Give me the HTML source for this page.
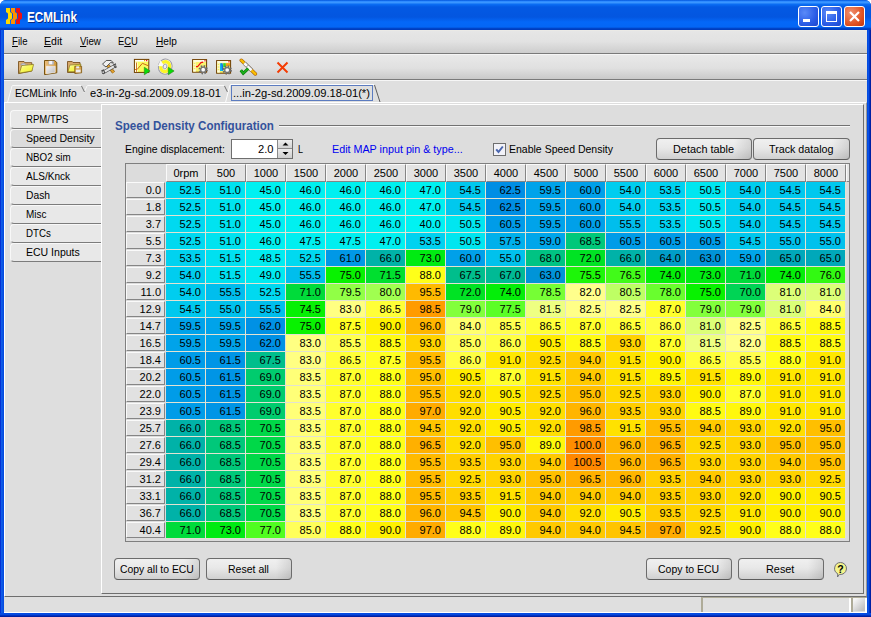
<!DOCTYPE html>
<html><head><meta charset="utf-8"><title>ECMLink</title>
<style>
html,body{margin:0;padding:0;background:#fff;}
body{width:871px;height:617px;overflow:hidden;position:relative;font-family:"Liberation Sans",sans-serif;font-size:11px;color:#000;}
div,span{box-sizing:border-box;}
.abs{position:absolute;}
.l{position:absolute;white-space:nowrap;line-height:13px;font-size:11px;transform-origin:0 0;}
#win{position:absolute;left:0;top:0;width:871px;height:617px;background:linear-gradient(90deg,#001ccc 0,#0f5ce8 1.5px,#0a52e2 3px,#0048e0 4px,#0048e0 867px,#0a52e4 868.5px,#0036c8 869.5px,#001590 871px);border-radius:6px 6px 0 0;overflow:hidden;}
#title{position:absolute;left:0;top:0;width:871px;height:30px;background:linear-gradient(#0054dc 0px,#2f8cff 1.5px,#3a96ff 2.5px,#0a6cf2 4.5px,#0359e3 7px,#0356e0 17px,#0468f8 22px,#0466f5 27px,#0044c8 28.5px,#0038b8 30px);}
#title .l{line-height:16px;text-shadow:1px 1px 0 #0a2a80;}
#title .t{position:absolute;left:26px;top:7px;font-size:14px;color:#fff;letter-spacing:-0.2px;text-shadow:1px 1px 0 #0a2a80;}
.tb{position:absolute;top:6px;width:21px;height:21px;border:1px solid #fff;border-radius:3px;background:radial-gradient(circle at 30% 30%,#5a8af8,#2a5ce6 60%,#1c46cc);}
#client{position:absolute;left:4px;top:30px;width:863px;height:583px;background:#dedede;}
#menu{position:absolute;left:0;top:0;width:863px;height:24px;background:linear-gradient(#f0eee6 0,#e6e6e6 1px,#e2e2e2 50%,#cdcdcd);border-bottom:1px solid #7a7a7a;}
#menu span{position:absolute;top:5px;font-size:11px;}
#tool{position:absolute;left:0;top:24px;width:863px;height:26px;background:linear-gradient(#e9e9e9,#e0e0e0 55%,#c9c9c9);border-bottom:1px solid #7a7a7a;border-top:1px solid #f6f6f6;}
u{text-decoration:underline;}
#panel{position:absolute;left:4px;top:102px;width:863px;height:495px;border-top:1px solid #fff;border-left:1px solid #fff;border-bottom:1px solid #6e6e6e;border-right:1px solid #9a9a9a;background:#dedede;}
.stab{position:absolute;left:10px;width:92px;height:19px;background:#e8e8e8;border:1px solid #7c7c7c;border-right:1px solid #7c7c7c;border-top:1px solid #f8f8f8;border-left:1px solid #f8f8f8;border-radius:4px 0 0 4px;padding:3px 0 0 15px;font-size:11px;white-space:nowrap;}
#inner{position:absolute;left:101px;top:104px;width:763px;height:490px;border-left:1px solid #fff;border-top:1px solid #fff;border-right:1px solid #6e6e6e;border-bottom:1px solid #6e6e6e;background:#dddddd;}
.btn{position:absolute;height:22px;border:1px solid #6c6c6c;border-radius:4px;background:linear-gradient(90deg,rgba(0,0,0,0) 0,rgba(0,0,0,0) 82%,rgba(0,0,0,0.10) 100%),linear-gradient(#f0f0f0,#e8e8e8 45%,#d0d0d0);border-bottom-color:#5c5c5c;}
#tbl{position:absolute;left:125px;top:163px;width:725px;height:379px;border:1px solid #7f7f7f;background:#dcdcdc;}
.ch{position:absolute;top:0;width:40px;height:18px;background:#e3e3e3;border-left:1px solid #fafafa;border-top:1px solid #fafafa;border-right:1px solid #858585;border-bottom:1px solid #858585;text-align:center;padding-top:2px;font-size:11px;line-height:13px;}
.rh{position:absolute;left:0;width:39px;height:16px;background:#e1e1e1;border-left:1px solid #fafafa;border-top:1px solid #fafafa;border-right:1px solid #858585;border-bottom:1px solid #858585;text-align:right;padding:1px 3px 0 0;font-size:11px;line-height:13px;}
.c{position:absolute;width:40px;height:17px;border-right:1px solid #e2e2d2;border-bottom:1px solid #e2e2d2;text-align:right;padding:2px 4px 0 0;font-size:11px;line-height:13px;}
</style></head><body>
<div id="win">
<div id="title">
<svg class="abs" style="left:6px;top:8px" width="17" height="16" viewBox="0 0 17 16"><path d="M0 0h4v4l2 1.500v5l-2 1.500v4h-4v-4l2-1.500v-5l-2-1.500z" fill="#ffd800"/><path d="M5 0h4v4l2 1.500v5l-2 1.500v4h-4v-4l2-1.500v-5l-2-1.500z" fill="#ff9000"/><path d="M10 0h4v4l2 1.500v5l-2 1.500v4h-4v-4l2-1.500v-5l-2-1.500z" fill="#f01010"/></svg>
<div class="l" style="left:26.9px;top:9px;font-size:14px;font-weight:bold;color:#fff;transform:scaleX(0.835);">ECMLink</div>
<div class="tb" style="left:798px"><div class="abs" style="left:4px;top:12px;width:7px;height:3px;background:#fff"></div></div>
<div class="tb" style="left:821px"><div class="abs" style="left:4px;top:4px;width:11px;height:11px;border:1px solid #fff;border-top:3px solid #fff"></div></div>
<div class="tb" style="left:844px;background:radial-gradient(circle at 30% 30%,#f09070,#e0501f 65%,#c0360f)"><svg class="abs" style="left:3px;top:3px" width="13" height="13"><path d="M2 2l9 9M11 2l-9 9" stroke="#fff" stroke-width="2.2"/></svg></div>
</div>
<div id="client">
<div id="menu"></div>
<div id="tool"></div>
</div>
<div class="l" style="left:11.5px;top:35px;font-size:11px;transform:scaleX(0.873);"><u>F</u>ile</div>
<div class="l" style="left:44.3px;top:35px;font-size:11px;transform:scaleX(0.959);"><u>E</u>dit</div>
<div class="l" style="left:79.7px;top:35px;font-size:11px;transform:scaleX(0.883);"><u>V</u>iew</div>
<div class="l" style="left:118.3px;top:35px;font-size:11px;transform:scaleX(0.856);">E<u>C</u>U</div>
<div class="l" style="left:155.5px;top:35px;font-size:11px;transform:scaleX(0.919);"><u>H</u>elp</div>
<svg class="abs" style="left:0;top:54px" width="300" height="26" viewBox="0 54 300 26">
<defs>
<linearGradient id="gy" x1="0" y1="0" x2="1" y2="1"><stop offset="0" stop-color="#fffff0"/><stop offset="0.350" stop-color="#f8f868"/><stop offset="1" stop-color="#f0f020"/></linearGradient>
<linearGradient id="gl" x1="0" y1="0" x2="1" y2="1"><stop offset="0" stop-color="#f4f4f8"/><stop offset="1" stop-color="#bcbcbc"/></linearGradient>
<linearGradient id="gb" x1="0" y1="0" x2="1" y2="0"><stop offset="0" stop-color="#ecc080"/><stop offset="1" stop-color="#d09838"/></linearGradient>
</defs>
<!-- open folder -->
<path d="M18.500 61.500h5.500l0.800 1.200h7v8.300l-13.300 2.600z" fill="#dcae72" stroke="#7a5220" stroke-width="0.900"/>
<path d="M21 64q3.500-2 5.500 1l1-0.800v3.800h-4l1.200-1.200q-1.200-1.800-3.700-1.800z" fill="#c9ccd8" stroke="#8a8e9c" stroke-width="0.500"/>
<path d="M21.700 65.600l11.900-1.200-1.700 6.600-12.500 2.100z" fill="url(#gy)" stroke="#86761c" stroke-width="0.700"/>
<!-- floppy -->
<path d="M44.500 60.500h10l2.300 2v10.300l-12.300 1.800z" fill="url(#gb)" stroke="#7a540e" stroke-width="1"/>
<rect x="48.400" y="60.800" width="5.400" height="3.800" fill="#b4b8c6"/><rect x="49.200" y="61" width="3" height="3.200" fill="#f4f4fa"/>
<path d="M46.300 66.200h8.900v6.200l-8.900 1.300z" fill="url(#gl)" stroke="#f6f6fa" stroke-width="0.500"/>
<!-- folder + floppy -->
<path d="M67.500 61.500h4.700l0.800 1h7v10h-12.500z" fill="#d8a868" stroke="#7a5220" stroke-width="0.900"/>
<path d="M69.800 65.100l11.100-0.900-1.500 7.500h-11.400z" fill="url(#gy)" stroke="#86761c" stroke-width="0.700"/>
<path d="M74.800 66.200h6.800v6.600l-6.800 0.700z" fill="#d8a048" stroke="#7a540e" stroke-width="0.800"/>
<rect x="76.200" y="66.300" width="3" height="2" fill="#e8ecf4"/><rect x="75.800" y="69.600" width="4.800" height="2.800" fill="#ececf0"/>
<!-- tools -->
<path d="M107.500 65l6.200 7.500" stroke="#7a5210" stroke-width="3.400"/>
<path d="M107.500 65l6.200 7.500" stroke="#e0a030" stroke-width="2.200"/>
<path d="M114.500 66l-11 6.300" stroke="#4c4c4c" stroke-width="3.600" stroke-linecap="round"/>
<path d="M114.500 66l-11 6.300" stroke="#e4e4e4" stroke-width="2.200" stroke-linecap="round"/>
<path d="M116 63.800l-2.300 1.200 1.600 2.500 1.400-0.700M101.300 71l2.200-1 1.200 2.600-2 1.300" fill="none" stroke="#4c4c4c" stroke-width="1.100"/>
<path d="M102.500 64.200l3.700-3.700h5l2.300 2.700-2.800-0.700-4.700 4.500z" fill="#f0f0f0" stroke="#444" stroke-width="0.900"/>
<!-- graph + play -->
<rect x="134.400" y="59.400" width="14.400" height="13" fill="#fafa5c" stroke="#6e3c00" stroke-width="1"/>
<rect x="135" y="60" width="13.200" height="1.600" fill="#fff"/><rect x="144" y="60" width="1.200" height="1.200" fill="#f6a800"/><rect x="146" y="60" width="1.300" height="1.200" fill="#f01818"/>
<rect x="135" y="62.300" width="2.600" height="9.600" fill="#fffff0"/>
<path d="M136.500 62.500v9.400M135 69.500h2" stroke="#cc6c14" stroke-width="0.900" fill="none"/>
<path d="M137 69.600l5.400-6.300 5.800 2.400" stroke="#cc6418" stroke-width="1" fill="none"/>
<path d="M144.300 67.200v7.600l5.800-3.800z" fill="#08dc08" stroke="#2c8414" stroke-width="0.600"/>
<!-- cd + play -->
<ellipse cx="165.200" cy="66.600" rx="6.800" ry="7.600" transform="rotate(18 165.200 66.600)" fill="#fafaf4" stroke="#9a9aa4" stroke-width="1"/>
<ellipse cx="165.200" cy="66.600" rx="4.300" ry="5" transform="rotate(18 165.200 66.600)" fill="none" stroke="#fcf428" stroke-width="3.400"/>
<path d="M165 66.500L158 66 160.500 60.500z" fill="#fcfcf6"/>
<ellipse cx="165" cy="66.500" rx="1.900" ry="2.400" transform="rotate(18 165 66.500)" fill="#eeeef4" stroke="#9a9aaa" stroke-width="0.900"/>
<path d="M168.300 67.200v7.600l5.800-3.800z" fill="#08dc08" stroke="#2c8414" stroke-width="0.600"/>
<!-- graph + gear -->
<rect x="192.600" y="59.600" width="14" height="12.600" fill="#f8f470" stroke="#6e3c00" stroke-width="1"/>
<rect x="193.200" y="60.200" width="12.800" height="1.500" fill="#fff"/><rect x="202.800" y="60.200" width="1.200" height="1.200" fill="#fff"/><rect x="204.300" y="60.200" width="1.400" height="1.200" fill="#f01818"/>
<rect x="193.200" y="62.200" width="2.600" height="9.400" fill="#fffbe0"/><path d="M193.600 63.500h1.800M193.600 66h1.800M193.600 68.500h1.800" stroke="#f4ec60" stroke-width="1.400"/>
<path d="M196 66.600h1.600l3.400-4 2.200-0.500" stroke="#f01010" stroke-width="1.100" fill="none"/>
<circle cx="203.200" cy="69.700" r="3.600" fill="none" stroke="#6c6c6c" stroke-width="2.200" stroke-dasharray="1.500 1.330"/>
<circle cx="203.200" cy="69.700" r="2.500" fill="#fcfcfc" stroke="#747474" stroke-width="1.300"/>
<!-- color table + gear -->
<rect x="216.600" y="60.600" width="14" height="12.600" fill="#f8f470" stroke="#6e3c00" stroke-width="1"/>
<rect x="217.200" y="61.200" width="12.800" height="1.500" fill="#fff"/><rect x="226.800" y="61.200" width="1.200" height="1.200" fill="#fff"/><rect x="228.300" y="61.200" width="1.400" height="1.200" fill="#f01818"/>
<rect x="217.200" y="63.200" width="2.600" height="9.400" fill="#fffbe0"/><path d="M217.600 64.500h1.800M217.600 67h1.800M217.600 69.500h1.800" stroke="#f4ec60" stroke-width="1.400"/>
<path d="M220 63.200h2l1.200 7.800h-3.200z" fill="#10b8f0"/><path d="M221.200 63.200h1.400l1 7h-1.600z" fill="#1070e8"/><rect x="223.200" y="63.200" width="2.600" height="4" fill="#30d030"/><rect x="226" y="63.200" width="4" height="2.800" fill="#f8a010"/>
<circle cx="227.200" cy="70" r="3.600" fill="none" stroke="#6c6c6c" stroke-width="2.200" stroke-dasharray="1.500 1.330"/>
<circle cx="227.200" cy="70" r="2.500" fill="#fcfcfc" stroke="#747474" stroke-width="1.300"/>
<!-- pen + check -->
<path d="M241.300 60.300l14 13.600" stroke="#b06810" stroke-width="3.600" stroke-linecap="round"/>
<path d="M241.300 60.300l14 13.600" stroke="#fcc000" stroke-width="2.200" stroke-linecap="round"/>
<path d="M244.300 63.200l7.200 7" stroke="#6c6c6c" stroke-width="3.800"/>
<path d="M244.300 63.200l7.200 7" stroke="#fafafa" stroke-width="2.600"/>
<path d="M246.500 66.800l1.500-1.500" stroke="#505050" stroke-width="0.800"/>
<path d="M240.800 70.300l2.400 3 5-4.600" fill="none" stroke="#0c7c0c" stroke-width="3"/>
<path d="M240.800 70.300l2.400 3 5-4.600" fill="none" stroke="#1cb01c" stroke-width="1.800"/>
<!-- red X -->
<path d="M277.500 62.500l10 10M287.500 62.500l-10 10" stroke="#f43c04" stroke-width="2"/>
</svg>
<!-- tab strip -->
<div class="abs" style="left:4px;top:80px;width:863px;height:23px;background:#dfdfdf;border-top:1px solid #f6f6f6"></div>
<svg class="abs" style="left:0;top:80px" width="871" height="24" viewBox="0 80 871 24" fill="none"><path d="M7.500 102.500L12 86l0.500-0.500H81" stroke="#f8f8f8"/><path d="M84 92.500L87 86l0.500-0.500H224" stroke="#f8f8f8"/><path d="M81.500 86l3 6M224.500 86l3 6" stroke="#707070"/><path d="M5 102.500H225.500L230 85l0.500-0.500H374" stroke="#fdfdfd"/><path d="M374.500 85L380 102" stroke="#5e5e5e"/><path d="M380 102.500H864" stroke="#fdfdfd"/></svg>
<div class="l" style="left:15.4px;top:87px;font-size:11px;transform:scaleX(0.933);">ECMLink Info</div>
<div class="l" style="left:89.6px;top:87px;font-size:11px;transform:scaleX(1.01);">e3-in-2g-sd.2009.09.18-01</div>
<div class="abs" style="left:231px;top:85px;width:142px;height:16px;border:1px solid #5c7cc0;"></div><div class="l" style="left:233.3px;top:87px;font-size:11px;transform:scaleX(1.018);">...in-2g-sd.2009.09.18-01(*)</div>
<div id="panel"></div>
<div class="stab" style="top:110px"></div><div class="l" style="left:26.4px;top:113px;font-size:11px;transform:scaleX(0.869);">RPM/TPS</div>
<div class="stab" style="top:129px;border-right:0;width:93px;background:#dcdcdc"></div><div class="l" style="left:26.4px;top:132px;font-size:11px;transform:scaleX(0.959);">Speed Density</div>
<div class="stab" style="top:148px"></div><div class="l" style="left:26.4px;top:151px;font-size:11px;transform:scaleX(0.89);">NBO2 sim</div>
<div class="stab" style="top:167px"></div><div class="l" style="left:26.4px;top:170px;font-size:11px;transform:scaleX(0.913);">ALS/Knck</div>
<div class="stab" style="top:186px"></div><div class="l" style="left:26.4px;top:189px;font-size:11px;transform:scaleX(0.934);">Dash</div>
<div class="stab" style="top:205px"></div><div class="l" style="left:26.4px;top:208px;font-size:11px;transform:scaleX(0.902);">Misc</div>
<div class="stab" style="top:224px"></div><div class="l" style="left:26.4px;top:227px;font-size:11px;transform:scaleX(0.882);">DTCs</div>
<div class="stab" style="top:243px"></div><div class="l" style="left:26.4px;top:246px;font-size:11px;transform:scaleX(0.956);">ECU Inputs</div>
<div id="inner"></div>
<div class="l" style="left:114.7px;top:119.5px;font-size:12px;font-weight:bold;color:#34529c;transform:scaleX(0.965);">Speed Density Configuration</div>
<div class="abs" style="left:279px;top:125px;width:571px;height:2px;background:linear-gradient(#727272 50%,#f8f8f8 50%)"></div>
<div class="l" style="left:124.7px;top:143px;font-size:11px;transform:scaleX(0.949);">Engine displacement:</div>
<div class="abs" style="left:231px;top:139px;width:62px;height:20px;background:#fff;border:1px solid #6e6e6e;"></div><div class="l" style="left:257.8px;top:143px;font-size:11px;transform:scaleX(1.013);">2.0</div>
<div class="abs" style="left:277px;top:140px;width:15px;height:9px;background:linear-gradient(#eee,#d2d2d2);border-left:1px solid #8a8a8a;border-bottom:1px solid #8a8a8a"></div>
<div class="abs" style="left:277px;top:149px;width:15px;height:9px;background:linear-gradient(#ececec,#cecece);border-left:1px solid #8a8a8a"></div>
<svg class="abs" style="left:282px;top:142px" width="7" height="14" viewBox="0 0 7 14"><path d="M0.500 3.500L3.500 0.500 6.500 3.500zM0.500 10L3.500 13 6.500 10z" fill="#000"/></svg>
<div class="l" style="left:297.5px;top:143px;font-size:11px;transform:scaleX(0.816);">L</div>
<div class="l" style="left:332.2px;top:143px;font-size:11px;color:#0000f0;transform:scaleX(0.977);">Edit MAP input pin &amp; type...</div>
<div class="abs" style="left:493px;top:143px;width:13px;height:13px;background:#f2f2f8;border:1px solid #6e6e6e"></div><svg class="abs" style="left:493px;top:143px" width="13" height="13" viewBox="0 0 13 13"><path d="M3.200 6.300l2.300 2.700 4.300-5.500" fill="none" stroke="#4a66ae" stroke-width="2"/></svg>
<div class="l" style="left:509.4px;top:143px;font-size:11px;transform:scaleX(0.955);">Enable Speed Density</div>
<div class="btn" style="left:656px;top:138px;width:96px"></div><div class="l" style="left:673.2px;top:143px;font-size:11px;transform:scaleX(0.988);">Detach table</div>
<div class="btn" style="left:753px;top:138px;width:97px"></div><div class="l" style="left:768.6px;top:143px;font-size:11px;transform:scaleX(0.974);">Track datalog</div>
<div id="tbl">
<div class="ch" style="left:40px">0rpm</div>
<div class="ch" style="left:80px">500</div>
<div class="ch" style="left:120px">1000</div>
<div class="ch" style="left:160px">1500</div>
<div class="ch" style="left:200px">2000</div>
<div class="ch" style="left:240px">2500</div>
<div class="ch" style="left:280px">3000</div>
<div class="ch" style="left:320px">3500</div>
<div class="ch" style="left:360px">4000</div>
<div class="ch" style="left:400px">4500</div>
<div class="ch" style="left:440px">5000</div>
<div class="ch" style="left:480px">5500</div>
<div class="ch" style="left:520px">6000</div>
<div class="ch" style="left:560px">6500</div>
<div class="ch" style="left:600px">7000</div>
<div class="ch" style="left:640px">7500</div>
<div class="ch" style="left:680px">8000</div>
<div class="rh" style="top:18px">0.0</div>
<div class="c" style="left:40px;top:18px;background:#00d9f0">52.5</div>
<div class="c" style="left:80px;top:18px;background:#00e3f0">51.0</div>
<div class="c" style="left:120px;top:18px;background:#00f1f1">45.0</div>
<div class="c" style="left:160px;top:18px;background:#00f0f0">46.0</div>
<div class="c" style="left:200px;top:18px;background:#00f0f0">46.0</div>
<div class="c" style="left:240px;top:18px;background:#00f0f0">46.0</div>
<div class="c" style="left:280px;top:18px;background:#00f0f0">47.0</div>
<div class="c" style="left:320px;top:18px;background:#00c8ee">54.5</div>
<div class="c" style="left:360px;top:18px;background:#008ee4">62.5</div>
<div class="c" style="left:400px;top:18px;background:#00a3ea">59.5</div>
<div class="c" style="left:440px;top:18px;background:#00a0e9">60.0</div>
<div class="c" style="left:480px;top:18px;background:#00cdef">54.0</div>
<div class="c" style="left:520px;top:18px;background:#00d2f0">53.5</div>
<div class="c" style="left:560px;top:18px;background:#00e6f0">50.5</div>
<div class="c" style="left:600px;top:18px;background:#00cdef">54.0</div>
<div class="c" style="left:640px;top:18px;background:#00c8ee">54.5</div>
<div class="c" style="left:680px;top:18px;background:#00c8ee">54.5</div>
<div class="rh" style="top:35px">1.8</div>
<div class="c" style="left:40px;top:35px;background:#00d9f0">52.5</div>
<div class="c" style="left:80px;top:35px;background:#00e3f0">51.0</div>
<div class="c" style="left:120px;top:35px;background:#00f1f1">45.0</div>
<div class="c" style="left:160px;top:35px;background:#00f0f0">46.0</div>
<div class="c" style="left:200px;top:35px;background:#00f0f0">46.0</div>
<div class="c" style="left:240px;top:35px;background:#00f0f0">46.0</div>
<div class="c" style="left:280px;top:35px;background:#00f0f0">47.0</div>
<div class="c" style="left:320px;top:35px;background:#00c8ee">54.5</div>
<div class="c" style="left:360px;top:35px;background:#008ee4">62.5</div>
<div class="c" style="left:400px;top:35px;background:#00a3ea">59.5</div>
<div class="c" style="left:440px;top:35px;background:#00a0e9">60.0</div>
<div class="c" style="left:480px;top:35px;background:#00cdef">54.0</div>
<div class="c" style="left:520px;top:35px;background:#00d2f0">53.5</div>
<div class="c" style="left:560px;top:35px;background:#00e6f0">50.5</div>
<div class="c" style="left:600px;top:35px;background:#00cdef">54.0</div>
<div class="c" style="left:640px;top:35px;background:#00c8ee">54.5</div>
<div class="c" style="left:680px;top:35px;background:#00c8ee">54.5</div>
<div class="rh" style="top:52px">3.7</div>
<div class="c" style="left:40px;top:52px;background:#00d9f0">52.5</div>
<div class="c" style="left:80px;top:52px;background:#00e3f0">51.0</div>
<div class="c" style="left:120px;top:52px;background:#00f1f1">45.0</div>
<div class="c" style="left:160px;top:52px;background:#00f0f0">46.0</div>
<div class="c" style="left:200px;top:52px;background:#00f0f0">46.0</div>
<div class="c" style="left:240px;top:52px;background:#00f0f0">46.0</div>
<div class="c" style="left:280px;top:52px;background:#00f2f2">40.0</div>
<div class="c" style="left:320px;top:52px;background:#00e6f0">50.5</div>
<div class="c" style="left:360px;top:52px;background:#009ce8">60.5</div>
<div class="c" style="left:400px;top:52px;background:#00a3ea">59.5</div>
<div class="c" style="left:440px;top:52px;background:#00a0e9">60.0</div>
<div class="c" style="left:480px;top:52px;background:#00beed">55.5</div>
<div class="c" style="left:520px;top:52px;background:#00d2f0">53.5</div>
<div class="c" style="left:560px;top:52px;background:#00e6f0">50.5</div>
<div class="c" style="left:600px;top:52px;background:#00cdef">54.0</div>
<div class="c" style="left:640px;top:52px;background:#00c8ee">54.5</div>
<div class="c" style="left:680px;top:52px;background:#00c8ee">54.5</div>
<div class="rh" style="top:69px">5.5</div>
<div class="c" style="left:40px;top:69px;background:#00d9f0">52.5</div>
<div class="c" style="left:80px;top:69px;background:#00e3f0">51.0</div>
<div class="c" style="left:120px;top:69px;background:#00f0f0">46.0</div>
<div class="c" style="left:160px;top:69px;background:#00eff0">47.5</div>
<div class="c" style="left:200px;top:69px;background:#00eff0">47.5</div>
<div class="c" style="left:240px;top:69px;background:#00f0f0">47.0</div>
<div class="c" style="left:280px;top:69px;background:#00d2f0">53.5</div>
<div class="c" style="left:320px;top:69px;background:#00e6f0">50.5</div>
<div class="c" style="left:360px;top:69px;background:#00b0eb">57.5</div>
<div class="c" style="left:400px;top:69px;background:#00a6ea">59.0</div>
<div class="c" style="left:440px;top:69px;background:#00c87a">68.5</div>
<div class="c" style="left:480px;top:69px;background:#009ce8">60.5</div>
<div class="c" style="left:520px;top:69px;background:#009ce8">60.5</div>
<div class="c" style="left:560px;top:69px;background:#009ce8">60.5</div>
<div class="c" style="left:600px;top:69px;background:#00c8ee">54.5</div>
<div class="c" style="left:640px;top:69px;background:#00c1ed">55.0</div>
<div class="c" style="left:680px;top:69px;background:#00c1ed">55.0</div>
<div class="rh" style="top:86px">7.3</div>
<div class="c" style="left:40px;top:86px;background:#00d2f0">53.5</div>
<div class="c" style="left:80px;top:86px;background:#00e0f0">51.5</div>
<div class="c" style="left:120px;top:86px;background:#00ecf0">48.5</div>
<div class="c" style="left:160px;top:86px;background:#00d9f0">52.5</div>
<div class="c" style="left:200px;top:86px;background:#0098e7">61.0</div>
<div class="c" style="left:240px;top:86px;background:#00b2a8">66.0</div>
<div class="c" style="left:280px;top:86px;background:#00eb12">73.0</div>
<div class="c" style="left:320px;top:86px;background:#00a0e9">60.0</div>
<div class="c" style="left:360px;top:86px;background:#00c1ed">55.0</div>
<div class="c" style="left:400px;top:86px;background:#00c383">68.0</div>
<div class="c" style="left:440px;top:86px;background:#00e324">72.0</div>
<div class="c" style="left:480px;top:86px;background:#00b2a8">66.0</div>
<div class="c" style="left:520px;top:86px;background:#009ec8">64.0</div>
<div class="c" style="left:560px;top:86px;background:#0094d8">63.0</div>
<div class="c" style="left:600px;top:86px;background:#00a6ea">59.0</div>
<div class="c" style="left:640px;top:86px;background:#00a8ba">65.0</div>
<div class="c" style="left:680px;top:86px;background:#00a8ba">65.0</div>
<div class="rh" style="top:103px">9.2</div>
<div class="c" style="left:40px;top:103px;background:#00cdef">54.0</div>
<div class="c" style="left:80px;top:103px;background:#00e0f0">51.5</div>
<div class="c" style="left:120px;top:103px;background:#00eaf0">49.0</div>
<div class="c" style="left:160px;top:103px;background:#00beed">55.5</div>
<div class="c" style="left:200px;top:103px;background:#08f200">75.0</div>
<div class="c" style="left:240px;top:103px;background:#00df2f">71.5</div>
<div class="c" style="left:280px;top:103px;background:#ffff19">88.0</div>
<div class="c" style="left:320px;top:103px;background:#00be8c">67.5</div>
<div class="c" style="left:360px;top:103px;background:#00ba95">67.0</div>
<div class="c" style="left:400px;top:103px;background:#0094d8">63.0</div>
<div class="c" style="left:440px;top:103px;background:#1df609">75.5</div>
<div class="c" style="left:480px;top:103px;background:#41fb19">76.5</div>
<div class="c" style="left:520px;top:103px;background:#04ee09">74.0</div>
<div class="c" style="left:560px;top:103px;background:#00eb12">73.0</div>
<div class="c" style="left:600px;top:103px;background:#00db3a">71.0</div>
<div class="c" style="left:640px;top:103px;background:#04ee09">74.0</div>
<div class="c" style="left:680px;top:103px;background:#32f912">76.0</div>
<div class="rh" style="top:120px">11.0</div>
<div class="c" style="left:40px;top:120px;background:#00cdef">54.0</div>
<div class="c" style="left:80px;top:120px;background:#00beed">55.5</div>
<div class="c" style="left:120px;top:120px;background:#00d9f0">52.5</div>
<div class="c" style="left:160px;top:120px;background:#00db3a">71.0</div>
<div class="c" style="left:200px;top:120px;background:#91ff46">79.5</div>
<div class="c" style="left:240px;top:120px;background:#a0ff50">80.0</div>
<div class="c" style="left:280px;top:120px;background:#ffba00">95.5</div>
<div class="c" style="left:320px;top:120px;background:#00e324">72.0</div>
<div class="c" style="left:360px;top:120px;background:#04ee09">74.0</div>
<div class="c" style="left:400px;top:120px;background:#76fe35">78.5</div>
<div class="c" style="left:440px;top:120px;background:#ffff8c">82.0</div>
<div class="c" style="left:480px;top:120px;background:#beff64">80.5</div>
<div class="c" style="left:520px;top:120px;background:#69fe2e">78.0</div>
<div class="c" style="left:560px;top:120px;background:#08f200">75.0</div>
<div class="c" style="left:600px;top:120px;background:#00d455">70.0</div>
<div class="c" style="left:640px;top:120px;background:#dcff78">81.0</div>
<div class="c" style="left:680px;top:120px;background:#dcff78">81.0</div>
<div class="rh" style="top:137px">12.9</div>
<div class="c" style="left:40px;top:137px;background:#00c8ee">54.5</div>
<div class="c" style="left:80px;top:137px;background:#00c1ed">55.0</div>
<div class="c" style="left:120px;top:137px;background:#00beed">55.5</div>
<div class="c" style="left:160px;top:137px;background:#06f004">74.5</div>
<div class="c" style="left:200px;top:137px;background:#ffff82">83.0</div>
<div class="c" style="left:240px;top:137px;background:#ffff38">86.5</div>
<div class="c" style="left:280px;top:137px;background:#ff9b00">98.5</div>
<div class="c" style="left:320px;top:137px;background:#82ff3c">79.0</div>
<div class="c" style="left:360px;top:137px;background:#5cfe27">77.5</div>
<div class="c" style="left:400px;top:137px;background:#eeff82">81.5</div>
<div class="c" style="left:440px;top:137px;background:#ffff87">82.5</div>
<div class="c" style="left:480px;top:137px;background:#ffff87">82.5</div>
<div class="c" style="left:520px;top:137px;background:#ffff2d">87.0</div>
<div class="c" style="left:560px;top:137px;background:#82ff3c">79.0</div>
<div class="c" style="left:600px;top:137px;background:#82ff3c">79.0</div>
<div class="c" style="left:640px;top:137px;background:#dcff78">81.0</div>
<div class="c" style="left:680px;top:137px;background:#ffff6e">84.0</div>
<div class="rh" style="top:154px">14.7</div>
<div class="c" style="left:40px;top:154px;background:#00a3ea">59.5</div>
<div class="c" style="left:80px;top:154px;background:#00a3ea">59.5</div>
<div class="c" style="left:120px;top:154px;background:#0091e5">62.0</div>
<div class="c" style="left:160px;top:154px;background:#08f200">75.0</div>
<div class="c" style="left:200px;top:154px;background:#ffff23">87.5</div>
<div class="c" style="left:240px;top:154px;background:#fff000">90.0</div>
<div class="c" style="left:280px;top:154px;background:#ffb500">96.0</div>
<div class="c" style="left:320px;top:154px;background:#ffff6e">84.0</div>
<div class="c" style="left:360px;top:154px;background:#ffff4f">85.5</div>
<div class="c" style="left:400px;top:154px;background:#ffff38">86.5</div>
<div class="c" style="left:440px;top:154px;background:#ffff2d">87.0</div>
<div class="c" style="left:480px;top:154px;background:#ffff38">86.5</div>
<div class="c" style="left:520px;top:154px;background:#ffff44">86.0</div>
<div class="c" style="left:560px;top:154px;background:#dcff78">81.0</div>
<div class="c" style="left:600px;top:154px;background:#ffff87">82.5</div>
<div class="c" style="left:640px;top:154px;background:#ffff38">86.5</div>
<div class="c" style="left:680px;top:154px;background:#fffb13">88.5</div>
<div class="rh" style="top:171px">16.5</div>
<div class="c" style="left:40px;top:171px;background:#00a3ea">59.5</div>
<div class="c" style="left:80px;top:171px;background:#00a3ea">59.5</div>
<div class="c" style="left:120px;top:171px;background:#0091e5">62.0</div>
<div class="c" style="left:160px;top:171px;background:#ffff82">83.0</div>
<div class="c" style="left:200px;top:171px;background:#ffff4f">85.5</div>
<div class="c" style="left:240px;top:171px;background:#fffb13">88.5</div>
<div class="c" style="left:280px;top:171px;background:#ffd300">93.0</div>
<div class="c" style="left:320px;top:171px;background:#ffff5a">85.0</div>
<div class="c" style="left:360px;top:171px;background:#ffff44">86.0</div>
<div class="c" style="left:400px;top:171px;background:#ffec00">90.5</div>
<div class="c" style="left:440px;top:171px;background:#fffb13">88.5</div>
<div class="c" style="left:480px;top:171px;background:#ffd300">93.0</div>
<div class="c" style="left:520px;top:171px;background:#ffff2d">87.0</div>
<div class="c" style="left:560px;top:171px;background:#eeff82">81.5</div>
<div class="c" style="left:600px;top:171px;background:#ffff8c">82.0</div>
<div class="c" style="left:640px;top:171px;background:#fffb13">88.5</div>
<div class="c" style="left:680px;top:171px;background:#fffb13">88.5</div>
<div class="rh" style="top:188px">18.4</div>
<div class="c" style="left:40px;top:188px;background:#009ce8">60.5</div>
<div class="c" style="left:80px;top:188px;background:#0095e6">61.5</div>
<div class="c" style="left:120px;top:188px;background:#00be8c">67.5</div>
<div class="c" style="left:160px;top:188px;background:#ffff82">83.0</div>
<div class="c" style="left:200px;top:188px;background:#ffff38">86.5</div>
<div class="c" style="left:240px;top:188px;background:#ffff23">87.5</div>
<div class="c" style="left:280px;top:188px;background:#ffba00">95.5</div>
<div class="c" style="left:320px;top:188px;background:#ffff44">86.0</div>
<div class="c" style="left:360px;top:188px;background:#ffe700">91.0</div>
<div class="c" style="left:400px;top:188px;background:#ffd800">92.5</div>
<div class="c" style="left:440px;top:188px;background:#ffc900">94.0</div>
<div class="c" style="left:480px;top:188px;background:#ffe200">91.5</div>
<div class="c" style="left:520px;top:188px;background:#fff000">90.0</div>
<div class="c" style="left:560px;top:188px;background:#ffff38">86.5</div>
<div class="c" style="left:600px;top:188px;background:#ffff4f">85.5</div>
<div class="c" style="left:640px;top:188px;background:#ffff19">88.0</div>
<div class="c" style="left:680px;top:188px;background:#ffe700">91.0</div>
<div class="rh" style="top:205px">20.2</div>
<div class="c" style="left:40px;top:205px;background:#009ce8">60.5</div>
<div class="c" style="left:80px;top:205px;background:#0095e6">61.5</div>
<div class="c" style="left:120px;top:205px;background:#00cc6e">69.0</div>
<div class="c" style="left:160px;top:205px;background:#ffff78">83.5</div>
<div class="c" style="left:200px;top:205px;background:#ffff2d">87.0</div>
<div class="c" style="left:240px;top:205px;background:#ffff19">88.0</div>
<div class="c" style="left:280px;top:205px;background:#ffbf00">95.0</div>
<div class="c" style="left:320px;top:205px;background:#ffec00">90.5</div>
<div class="c" style="left:360px;top:205px;background:#ffff2d">87.0</div>
<div class="c" style="left:400px;top:205px;background:#ffe200">91.5</div>
<div class="c" style="left:440px;top:205px;background:#ffc900">94.0</div>
<div class="c" style="left:480px;top:205px;background:#ffe200">91.5</div>
<div class="c" style="left:520px;top:205px;background:#fff406">89.5</div>
<div class="c" style="left:560px;top:205px;background:#ffe200">91.5</div>
<div class="c" style="left:600px;top:205px;background:#fff80c">89.0</div>
<div class="c" style="left:640px;top:205px;background:#ffe700">91.0</div>
<div class="c" style="left:680px;top:205px;background:#ffe700">91.0</div>
<div class="rh" style="top:222px">22.0</div>
<div class="c" style="left:40px;top:222px;background:#009ce8">60.5</div>
<div class="c" style="left:80px;top:222px;background:#0095e6">61.5</div>
<div class="c" style="left:120px;top:222px;background:#00cc6e">69.0</div>
<div class="c" style="left:160px;top:222px;background:#ffff78">83.5</div>
<div class="c" style="left:200px;top:222px;background:#ffff2d">87.0</div>
<div class="c" style="left:240px;top:222px;background:#ffff19">88.0</div>
<div class="c" style="left:280px;top:222px;background:#ffba00">95.5</div>
<div class="c" style="left:320px;top:222px;background:#ffde00">92.0</div>
<div class="c" style="left:360px;top:222px;background:#ffec00">90.5</div>
<div class="c" style="left:400px;top:222px;background:#ffd800">92.5</div>
<div class="c" style="left:440px;top:222px;background:#ffbf00">95.0</div>
<div class="c" style="left:480px;top:222px;background:#ffd800">92.5</div>
<div class="c" style="left:520px;top:222px;background:#ffd300">93.0</div>
<div class="c" style="left:560px;top:222px;background:#fff000">90.0</div>
<div class="c" style="left:600px;top:222px;background:#ffff2d">87.0</div>
<div class="c" style="left:640px;top:222px;background:#ffe700">91.0</div>
<div class="c" style="left:680px;top:222px;background:#ffe700">91.0</div>
<div class="rh" style="top:239px">23.9</div>
<div class="c" style="left:40px;top:239px;background:#009ce8">60.5</div>
<div class="c" style="left:80px;top:239px;background:#0095e6">61.5</div>
<div class="c" style="left:120px;top:239px;background:#00cc6e">69.0</div>
<div class="c" style="left:160px;top:239px;background:#ffff78">83.5</div>
<div class="c" style="left:200px;top:239px;background:#ffff2d">87.0</div>
<div class="c" style="left:240px;top:239px;background:#ffff19">88.0</div>
<div class="c" style="left:280px;top:239px;background:#ffab00">97.0</div>
<div class="c" style="left:320px;top:239px;background:#ffde00">92.0</div>
<div class="c" style="left:360px;top:239px;background:#ffec00">90.5</div>
<div class="c" style="left:400px;top:239px;background:#ffde00">92.0</div>
<div class="c" style="left:440px;top:239px;background:#ffb500">96.0</div>
<div class="c" style="left:480px;top:239px;background:#ffce00">93.5</div>
<div class="c" style="left:520px;top:239px;background:#ffd300">93.0</div>
<div class="c" style="left:560px;top:239px;background:#fffb13">88.5</div>
<div class="c" style="left:600px;top:239px;background:#fff80c">89.0</div>
<div class="c" style="left:640px;top:239px;background:#ffe700">91.0</div>
<div class="c" style="left:680px;top:239px;background:#ffe700">91.0</div>
<div class="rh" style="top:256px">25.7</div>
<div class="c" style="left:40px;top:256px;background:#00b2a8">66.0</div>
<div class="c" style="left:80px;top:256px;background:#00c87a">68.5</div>
<div class="c" style="left:120px;top:256px;background:#00d848">70.5</div>
<div class="c" style="left:160px;top:256px;background:#ffff78">83.5</div>
<div class="c" style="left:200px;top:256px;background:#ffff2d">87.0</div>
<div class="c" style="left:240px;top:256px;background:#ffff19">88.0</div>
<div class="c" style="left:280px;top:256px;background:#ffc400">94.5</div>
<div class="c" style="left:320px;top:256px;background:#ffde00">92.0</div>
<div class="c" style="left:360px;top:256px;background:#ffec00">90.5</div>
<div class="c" style="left:400px;top:256px;background:#ffde00">92.0</div>
<div class="c" style="left:440px;top:256px;background:#ff9b00">98.5</div>
<div class="c" style="left:480px;top:256px;background:#ffe200">91.5</div>
<div class="c" style="left:520px;top:256px;background:#ffba00">95.5</div>
<div class="c" style="left:560px;top:256px;background:#ffc900">94.0</div>
<div class="c" style="left:600px;top:256px;background:#ffd300">93.0</div>
<div class="c" style="left:640px;top:256px;background:#ffde00">92.0</div>
<div class="c" style="left:680px;top:256px;background:#ffbf00">95.0</div>
<div class="rh" style="top:273px">27.6</div>
<div class="c" style="left:40px;top:273px;background:#00b2a8">66.0</div>
<div class="c" style="left:80px;top:273px;background:#00c87a">68.5</div>
<div class="c" style="left:120px;top:273px;background:#00d848">70.5</div>
<div class="c" style="left:160px;top:273px;background:#ffff78">83.5</div>
<div class="c" style="left:200px;top:273px;background:#ffff2d">87.0</div>
<div class="c" style="left:240px;top:273px;background:#ffff19">88.0</div>
<div class="c" style="left:280px;top:273px;background:#ffb000">96.5</div>
<div class="c" style="left:320px;top:273px;background:#ffde00">92.0</div>
<div class="c" style="left:360px;top:273px;background:#ffbf00">95.0</div>
<div class="c" style="left:400px;top:273px;background:#fff80c">89.0</div>
<div class="c" style="left:440px;top:273px;background:#ff8d00">100.0</div>
<div class="c" style="left:480px;top:273px;background:#ffb500">96.0</div>
<div class="c" style="left:520px;top:273px;background:#ffb000">96.5</div>
<div class="c" style="left:560px;top:273px;background:#ffd800">92.5</div>
<div class="c" style="left:600px;top:273px;background:#ffd300">93.0</div>
<div class="c" style="left:640px;top:273px;background:#ffbf00">95.0</div>
<div class="c" style="left:680px;top:273px;background:#ffbf00">95.0</div>
<div class="rh" style="top:290px">29.4</div>
<div class="c" style="left:40px;top:290px;background:#00b2a8">66.0</div>
<div class="c" style="left:80px;top:290px;background:#00c87a">68.5</div>
<div class="c" style="left:120px;top:290px;background:#00d848">70.5</div>
<div class="c" style="left:160px;top:290px;background:#ffff78">83.5</div>
<div class="c" style="left:200px;top:290px;background:#ffff2d">87.0</div>
<div class="c" style="left:240px;top:290px;background:#ffff19">88.0</div>
<div class="c" style="left:280px;top:290px;background:#ffba00">95.5</div>
<div class="c" style="left:320px;top:290px;background:#ffce00">93.5</div>
<div class="c" style="left:360px;top:290px;background:#ffd300">93.0</div>
<div class="c" style="left:400px;top:290px;background:#ffc900">94.0</div>
<div class="c" style="left:440px;top:290px;background:#ff8800">100.5</div>
<div class="c" style="left:480px;top:290px;background:#ffb500">96.0</div>
<div class="c" style="left:520px;top:290px;background:#ffb000">96.5</div>
<div class="c" style="left:560px;top:290px;background:#ffd300">93.0</div>
<div class="c" style="left:600px;top:290px;background:#ffd300">93.0</div>
<div class="c" style="left:640px;top:290px;background:#ffc900">94.0</div>
<div class="c" style="left:680px;top:290px;background:#ffbf00">95.0</div>
<div class="rh" style="top:307px">31.2</div>
<div class="c" style="left:40px;top:307px;background:#00b2a8">66.0</div>
<div class="c" style="left:80px;top:307px;background:#00c87a">68.5</div>
<div class="c" style="left:120px;top:307px;background:#00d848">70.5</div>
<div class="c" style="left:160px;top:307px;background:#ffff78">83.5</div>
<div class="c" style="left:200px;top:307px;background:#ffff2d">87.0</div>
<div class="c" style="left:240px;top:307px;background:#ffff19">88.0</div>
<div class="c" style="left:280px;top:307px;background:#ffba00">95.5</div>
<div class="c" style="left:320px;top:307px;background:#ffd800">92.5</div>
<div class="c" style="left:360px;top:307px;background:#ffd300">93.0</div>
<div class="c" style="left:400px;top:307px;background:#ffbf00">95.0</div>
<div class="c" style="left:440px;top:307px;background:#ffb000">96.5</div>
<div class="c" style="left:480px;top:307px;background:#ffb500">96.0</div>
<div class="c" style="left:520px;top:307px;background:#ffce00">93.5</div>
<div class="c" style="left:560px;top:307px;background:#ffc900">94.0</div>
<div class="c" style="left:600px;top:307px;background:#ffd300">93.0</div>
<div class="c" style="left:640px;top:307px;background:#ffd300">93.0</div>
<div class="c" style="left:680px;top:307px;background:#ffd800">92.5</div>
<div class="rh" style="top:324px">33.1</div>
<div class="c" style="left:40px;top:324px;background:#00b2a8">66.0</div>
<div class="c" style="left:80px;top:324px;background:#00c87a">68.5</div>
<div class="c" style="left:120px;top:324px;background:#00d848">70.5</div>
<div class="c" style="left:160px;top:324px;background:#ffff78">83.5</div>
<div class="c" style="left:200px;top:324px;background:#ffff2d">87.0</div>
<div class="c" style="left:240px;top:324px;background:#ffff19">88.0</div>
<div class="c" style="left:280px;top:324px;background:#ffba00">95.5</div>
<div class="c" style="left:320px;top:324px;background:#ffce00">93.5</div>
<div class="c" style="left:360px;top:324px;background:#ffe200">91.5</div>
<div class="c" style="left:400px;top:324px;background:#ffc900">94.0</div>
<div class="c" style="left:440px;top:324px;background:#ffc900">94.0</div>
<div class="c" style="left:480px;top:324px;background:#ffc900">94.0</div>
<div class="c" style="left:520px;top:324px;background:#ffce00">93.5</div>
<div class="c" style="left:560px;top:324px;background:#ffd300">93.0</div>
<div class="c" style="left:600px;top:324px;background:#ffde00">92.0</div>
<div class="c" style="left:640px;top:324px;background:#fff000">90.0</div>
<div class="c" style="left:680px;top:324px;background:#ffec00">90.5</div>
<div class="rh" style="top:341px">36.7</div>
<div class="c" style="left:40px;top:341px;background:#00b2a8">66.0</div>
<div class="c" style="left:80px;top:341px;background:#00c87a">68.5</div>
<div class="c" style="left:120px;top:341px;background:#00d848">70.5</div>
<div class="c" style="left:160px;top:341px;background:#ffff78">83.5</div>
<div class="c" style="left:200px;top:341px;background:#ffff2d">87.0</div>
<div class="c" style="left:240px;top:341px;background:#ffff19">88.0</div>
<div class="c" style="left:280px;top:341px;background:#ffb500">96.0</div>
<div class="c" style="left:320px;top:341px;background:#ffc400">94.5</div>
<div class="c" style="left:360px;top:341px;background:#fff000">90.0</div>
<div class="c" style="left:400px;top:341px;background:#ffc900">94.0</div>
<div class="c" style="left:440px;top:341px;background:#ffde00">92.0</div>
<div class="c" style="left:480px;top:341px;background:#ffec00">90.5</div>
<div class="c" style="left:520px;top:341px;background:#ffce00">93.5</div>
<div class="c" style="left:560px;top:341px;background:#ffd800">92.5</div>
<div class="c" style="left:600px;top:341px;background:#ffe700">91.0</div>
<div class="c" style="left:640px;top:341px;background:#fff000">90.0</div>
<div class="c" style="left:680px;top:341px;background:#fff000">90.0</div>
<div class="rh" style="top:358px">40.4</div>
<div class="c" style="left:40px;top:358px;background:#00db3a">71.0</div>
<div class="c" style="left:80px;top:358px;background:#00eb12">73.0</div>
<div class="c" style="left:120px;top:358px;background:#50fd20">77.0</div>
<div class="c" style="left:160px;top:358px;background:#ffff5a">85.0</div>
<div class="c" style="left:200px;top:358px;background:#ffff19">88.0</div>
<div class="c" style="left:240px;top:358px;background:#fff000">90.0</div>
<div class="c" style="left:280px;top:358px;background:#ffab00">97.0</div>
<div class="c" style="left:320px;top:358px;background:#ffff19">88.0</div>
<div class="c" style="left:360px;top:358px;background:#fff80c">89.0</div>
<div class="c" style="left:400px;top:358px;background:#ffc900">94.0</div>
<div class="c" style="left:440px;top:358px;background:#ffc900">94.0</div>
<div class="c" style="left:480px;top:358px;background:#ffc400">94.5</div>
<div class="c" style="left:520px;top:358px;background:#ffab00">97.0</div>
<div class="c" style="left:560px;top:358px;background:#ffd800">92.5</div>
<div class="c" style="left:600px;top:358px;background:#fff000">90.0</div>
<div class="c" style="left:640px;top:358px;background:#ffff19">88.0</div>
<div class="c" style="left:680px;top:358px;background:#ffff19">88.0</div>
<div class="abs" style="left:720px;top:0;width:3px;height:18px;background:#e6e6e6;border-left:1px solid #fafafa;border-bottom:1px solid #858585"></div>
</div>
<div class="btn" style="left:114px;top:558px;width:86px"></div><div class="l" style="left:119.7px;top:563px;font-size:11px;transform:scaleX(0.943);">Copy all to ECU</div>
<div class="btn" style="left:206px;top:558px;width:86px"></div><div class="l" style="left:228.3px;top:563px;font-size:11px;transform:scaleX(0.956);">Reset all</div>
<div class="btn" style="left:646px;top:558px;width:86px"></div><div class="l" style="left:658.4px;top:563px;font-size:11px;transform:scaleX(0.953);">Copy to ECU</div>
<div class="btn" style="left:738px;top:558px;width:86px"></div><div class="l" style="left:766.4px;top:563px;font-size:11px;transform:scaleX(0.988);">Reset</div>
<svg class="abs" style="left:833px;top:561px" width="16" height="18" viewBox="0 0 16 18"><path d="M7.400 1.500a6 6 0 1 1-1 11.900l-1.900 2.600 0.300-3.200a6 6 0 0 1 2.600-11.300z" fill="#f4f48a" stroke="#6e6e78" stroke-width="1"/></svg><div class="l" style="left:837.3px;top:563px;font-size:10.5px;font-weight:bold">?</div>
<!-- status bar -->
<div class="abs" style="left:4px;top:597px;width:863px;height:16px;background:#dedede;"></div>
<div class="abs" style="left:701px;top:597px;width:166px;height:1px;background:#aeab98;"></div>
<div class="abs" style="left:4px;top:598px;width:698px;height:14px;background:#dfdfdf;"></div>
<div class="abs" style="left:4px;top:612px;width:863px;height:1px;background:#fff;"></div>
<div class="abs" style="left:701px;top:598px;width:2px;height:14px;background:#aeab98"></div>
<div class="abs" style="left:703px;top:598px;width:146px;height:14px;background:#e0e0e0;"></div>
<div class="abs" style="left:849px;top:598px;width:2px;height:14px;background:#fff"></div>
<div class="abs" style="left:851px;top:598px;width:2px;height:14px;background:#aeab98"></div>
<div class="abs" style="left:853px;top:598px;width:12px;height:13px;background:linear-gradient(135deg,#f4f4f4 15%,#c2c2c2 85%);"></div>
<div class="abs" style="left:865px;top:598px;width:2px;height:15px;background:#fff"></div>
<div class="abs" style="left:0;top:613px;width:871px;height:4px;background:linear-gradient(#0048e0,#0a50e4 30%,#0030c0 65%,#001890)"></div>
</div>
</body></html>
